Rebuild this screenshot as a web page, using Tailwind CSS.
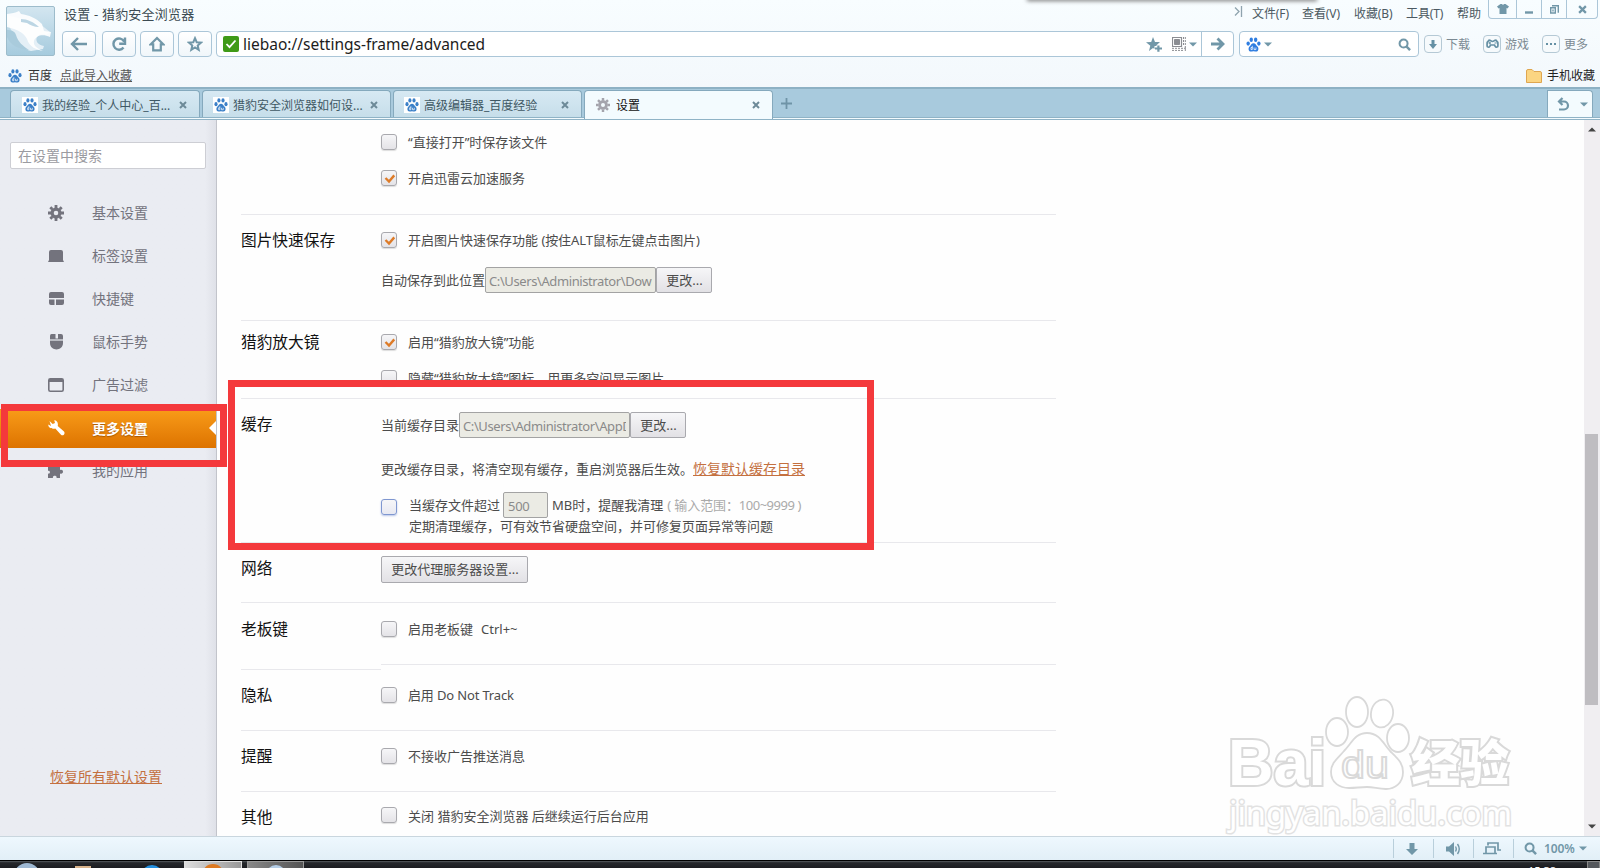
<!DOCTYPE html>
<html lang="zh-CN">
<head>
<meta charset="utf-8">
<title>设置 - 猎豹安全浏览器</title>
<script src="https://cdn.jsdelivr.net/npm/@tailwindcss/browser@4"></script>
</head>
<body class="relative flex h-[868px] w-[1600px] flex-col overflow-hidden bg-white font-['Noto_Sans','Noto_Sans_CJK_SC',sans-serif] text-[13px] whitespace-nowrap text-[#4c4c4c]">
<svg class="hidden">
  <symbol id="paw" viewBox="0 0 16 16">
    <ellipse cx="2.3" cy="7" rx="1.8" ry="2.3"/><ellipse cx="5.6" cy="2.8" rx="1.8" ry="2.4"/><ellipse cx="10.3" cy="2.8" rx="1.8" ry="2.4"/><ellipse cx="13.7" cy="7" rx="1.8" ry="2.3"/>
    <path d="M8 6.600c2 0 2.700 2 4.200 3.400 1.600 1.500 1.500 5.300-1.400 5.400-1.200 0-1.800-.3-2.800-.3s-1.600.3-2.800.3c-2.900-.1-3-3.900-1.400-5.400C5.300 8.600 6 6.600 8 6.600z"/>
    <path d="M6.700 9.400v4M6.700 11.200H5.300v2.200h1.400M8.600 11.200v2.200h2v-2.200" fill="none" stroke="#fff" stroke-width=".8"/>
  </symbol>
  <symbol id="gear" viewBox="0 0 16 16">
    <circle cx="8" cy="8" r="3.900" fill="none" stroke="currentColor" stroke-width="3.200"/>
    <g stroke="currentColor" stroke-width="2.800"><path d="M8 0v3M8 13v3M0 8h3M13 8h3M2.300 2.300l2 2M11.700 11.700l2 2M2.300 13.700l2-2M11.700 4.300l2-2"/></g>
  </symbol>
  <symbol id="close" viewBox="0 0 8 8"><path d="M1 1l6 6M7 1L1 7" stroke="currentColor" stroke-width="2"/></symbol>
  <symbol id="caret" viewBox="0 0 8 5"><path d="M0 .5h8L4 4.500z" fill="currentColor"/></symbol>
  <symbol id="mag" viewBox="0 0 14 14"><circle cx="6" cy="6" r="4.300" fill="none" stroke="currentColor" stroke-width="2.200"/><path d="M9 9l4 4" stroke="currentColor" stroke-width="2.600"/></symbol>
  <symbol id="tick" viewBox="0 0 16 16"><path d="M4 8l4 4 6-7" fill="none" stroke="#dd7b28" stroke-width="2.700"/></symbol>
</svg>

<!-- Browser header -->
<header class="flex h-[87px] shrink-0 bg-gradient-to-b from-[#f8fdff] to-[#f3f8fc]">
  <div class="flex w-[1234px] flex-col">
    <div class="flex h-[60px] pl-[6px] pt-[6px]">
      <div class="h-[50px] w-[50px] overflow-hidden rounded-[2px] border border-[#9dbccb] bg-gradient-to-b from-[#d3e6f0] to-[#a6cbde]">
        <svg width="48" height="48" viewBox="0 0 48 48">
          <path d="M0 15C7 27 9 40 24 44l12-2 1-3c-6-1-9-5-7-9 2-3 6-4 9-2l4-3-10-8L0 8z" fill="#e4eff6"/>
          <path d="M0 7c5-1 8-1 12-3l2 3c8 1 15 4 21 10l2 7 7 1-1 5c-7-3-14-2-16 4-1 5 3 7 9 10-6-1-14-4-16-12-3-6-8-8-13-10L0 20z" fill="#fff" opacity=".9"/>
          <path d="M14 12c6 0 13 3 18 8-5 0-9-2-12-4l-6-1z" fill="#bcd6e4"/>
          <path d="M0 23c4 0 8 1 9 5 2 7 7 11 13 15C11 42 3 38 0 30z" fill="#a9cbdc"/>
        </svg>
      </div>
      <div class="flex flex-col pl-[6px]">
        <div class="h-[25px] pl-[3px] text-[13px] leading-[17px] tracking-[0.2px] text-[#3b4a52]">设置 - 猎豹安全浏览器</div>
        <div class="ml-px flex items-start text-[#7197a8]">
          <div class="flex h-[26px] w-[34px] items-center justify-center rounded-[4px] border border-[#abc6d8] bg-gradient-to-b from-white to-[#f0f6fa]"><svg width="18" height="16" viewBox="0 0 18 16" fill="none" stroke="currentColor" stroke-width="2.400"><path d="M8 2L2 8l6 6M2.500 8H17"/></svg></div>
          <div class="ml-[6px] flex h-[26px] w-[34px] items-center justify-center rounded-[4px] border border-[#abc6d8] bg-gradient-to-b from-white to-[#f0f6fa]"><svg width="16" height="16" viewBox="0 0 16 16" fill="none" stroke="currentColor" stroke-width="2.400"><path d="M12.500 11.500A5.600 5.600 0 1 1 13 5.500M14 1.500v6.200H8.200"/></svg></div>
          <div class="ml-[4px] flex h-[26px] w-[34px] items-center justify-center rounded-[4px] border border-[#abc6d8] bg-gradient-to-b from-white to-[#f0f6fa]"><svg width="16" height="16" viewBox="0 0 16 16" fill="none" stroke="currentColor" stroke-width="2.200"><path d="M8 2L1.800 8.300h2.400v6h7.600v-6h2.400z"/></svg></div>
          <div class="ml-[4px] flex h-[26px] w-[34px] items-center justify-center rounded-[4px] border border-[#abc6d8] bg-gradient-to-b from-white to-[#f0f6fa]"><svg width="16" height="16" viewBox="0 0 16 16" fill="none" stroke="currentColor" stroke-width="2"><path d="M8 2.200l1.700 4 4.300.4-3.300 2.900 1 4.300L8 11.500l-3.700 2.300 1-4.300L2 6.600l4.300-.4z"/></svg></div>
          <div class="ml-[4px] flex h-[26px] w-[1018px] items-center rounded-[4px] border border-[#abc6d8] bg-white">
            <svg class="ml-[6px]" width="16" height="16" viewBox="0 0 16 16"><rect width="16" height="16" rx="2" fill="#3f9a17"/><path d="M3.500 8l3 3.200 6-6.700" fill="none" stroke="#fff" stroke-width="1.800"/></svg>
            <span class="ml-[4px] w-[899px] text-[15.500px] leading-6 text-[#1c1c1c]">liebao://settings-frame/advanced</span>
            <svg class="ml-[4px]" width="16" height="15" viewBox="0 0 16 15" fill="currentColor"><path d="M7 0l2 5h5l-3.500 3.200V9H8.500v3L7 11l-4 3 1.300-5.200L0 5.300 5.200 5z"/><path d="M11.300 8.500h2.200v2H16v2h-2.500v2.300h-2.200v-2.300H9v-2h2.300z"/></svg>
            <svg class="ml-[10px]" width="14" height="14" viewBox="0 0 14 14" fill="none" stroke="#8b8d92"><path d="M.5.5h9v9h-9z" stroke-width="1.200"/><path d="M2.500 2.500h5v5h-5z" fill="#8b8d92"/><path d="M11.500 0v9M13.300 0v14M0 11.300h14M0 13.400h11" stroke-dasharray="2 1" stroke-width="1"/></svg>
            <svg class="ml-[3px]" width="8" height="5"><use href="#caret"/></svg>
            <div class="ml-[4px] flex h-full flex-1 items-center justify-center border-l border-[#abc6d8]"><svg width="14" height="14" viewBox="0 0 14 14" fill="none" stroke="currentColor" stroke-width="2.800"><path d="M6.500 1.500L12 7l-5.500 5.500M12 7H0"/></svg></div>
          </div>
        </div>
      </div>
    </div>
    <div class="flex h-[27px] items-center pb-[1px] pl-[8px] pt-[5px] text-[12px] text-[#333]">
      <svg class="fill-[#3b80c8]" width="14" height="14"><use href="#paw"/></svg>
      <span class="ml-[6px]">百度</span>
      <span class="ml-[8px] text-[#555] underline underline-offset-1">点此导入收藏</span>
    </div>
  </div>
  <div class="flex flex-1 flex-col">
    <div class="flex h-[31px] items-start text-[12px] text-[#4b5961]">
      <svg class="mt-[6px]" width="9" height="11" viewBox="0 0 9 11" fill="none" stroke="#8fa3ae" stroke-width="1.300"><path d="M1 1.500l4 4-4 4M7.500 0v11"/></svg>
      <span class="ml-[9px] mt-[4px] w-[50px] leading-5 tracking-[-0.1px]">文件(F)</span>
      <span class="mt-[4px] w-[52px] leading-5 tracking-[-0.1px]">查看(V)</span>
      <span class="mt-[4px] w-[52px] leading-5 tracking-[-0.1px]">收藏(B)</span>
      <span class="mt-[4px] w-[51px] leading-5 tracking-[-0.1px]">工具(T)</span>
      <span class="mt-[4px] w-[31px] leading-5">帮助</span>
      <div class="flex h-[19px] w-[110px] rounded-b-[4px] border border-t-0 border-[#abc6d8] text-[#7197a8]">
        <div class="flex w-[27px] items-center justify-center"><svg width="12" height="10" viewBox="0 0 12 10" fill="currentColor"><path d="M3.500 0h1.300c.5 1 1.900 1 2.400 0h1.300L12 2.500l-1.500 2-1-.5v6h-7V4l-1 .5L0 2.500z"/></svg></div>
        <div class="flex w-[25px] items-center justify-center border-l border-[#abc6d8] pt-[6px]"><svg width="8" height="3"><path d="M0 1.500h8" stroke="currentColor" stroke-width="2.400"/></svg></div>
        <div class="flex w-[25px] items-center justify-center border-l border-[#abc6d8]"><svg width="9" height="9" viewBox="0 0 9 9" fill="none" stroke="currentColor" stroke-width="1.400"><path d="M2 .7h6.300v7M.7 2.700h4.600v5.300H.7zM3 4.500v2"/></svg></div>
        <div class="flex flex-1 items-center justify-center border-l border-[#abc6d8]"><svg width="9" height="9"><use href="#close"/></svg></div>
      </div>
    </div>
    <div class="flex h-[26px] items-center pl-[5px] text-[12px] text-[#7c8a93]">
      <div class="flex h-[26px] w-[180px] items-center rounded-[4px] border border-[#abc6d8] bg-white pl-[6px] text-[#7197a8]">
        <svg class="fill-[#2f7de0]" width="15" height="15"><use href="#paw"/></svg>
        <svg class="ml-[3px]" width="8" height="5"><use href="#caret"/></svg>
        <svg class="ml-[126px]" width="13" height="13"><use href="#mag"/></svg>
      </div>
      <div class="ml-[5px] flex h-[18px] w-[18px] items-center justify-center rounded-[4px] border border-[#b5c9d5] bg-[#f6fafc]"><svg width="8" height="9" viewBox="0 0 8 9" fill="#6590a4"><path d="M2.500 0h3v4H8L4 9 0 4h2.500z"/></svg></div>
      <span class="ml-[4px] w-[37px] pt-px">下载</span>
      <div class="flex h-[18px] w-[18px] items-center justify-center rounded-[4px] border border-[#b5c9d5] bg-[#f6fafc]"><svg width="13" height="10" viewBox="0 0 13 10" fill="none" stroke="#6590a4" stroke-width="1.700"><path d="M3 1.200c2 0 2 1.300 3.500 1.300S8 1.200 10 1.200c1.500 1 2.200 4 1.700 6.500-1.500 1.200-2.500.3-3.200-1.700h-4C3.800 8 2.800 8.900 1.300 7.700.8 5.200 1.500 2.200 3 1.200z"/><path d="M3.800 2.800v2.400M2.600 4h2.400M8.500 4h2" stroke-width="1.100"/></svg></div>
      <span class="ml-[4px] w-[37px] pt-px">游戏</span>
      <div class="flex h-[18px] w-[18px] items-center justify-center gap-[2px] rounded-[4px] border border-[#b5c9d5] bg-[#f6fafc]"><i class="size-[2px] bg-[#6590a4]"></i><i class="size-[2px] bg-[#6590a4]"></i><i class="size-[2px] bg-[#6590a4]"></i></div>
      <span class="ml-[4px] pt-px">更多</span>
    </div>
    <div class="flex h-[30px] items-center justify-end pr-[5px] pt-[7px] text-[12px] text-[#222]">
      <svg width="16" height="14" viewBox="0 0 16 14"><path d="M.5 2Q.5.500 2 .500h4L8 2.500h6q1.500 0 1.500 1.500v9.500H.5z" fill="#fbd582" stroke="#dfa650"/></svg>
      <span class="ml-[5px]">手机收藏</span>
    </div>
  </div>
</header>

<!-- Tab strip -->
<nav class="flex h-[33px] shrink-0 flex-col border-t-2 border-[#8db1c4] bg-[#a8cadd]">
  <div class="flex h-[28px] items-start pl-[10px] pt-px text-[12px] text-[#3f5864]">
    <div class="flex h-[27px] w-[190px] items-center rounded-t-[4px] border border-b-0 border-[#85a9bd] bg-gradient-to-b from-[#d7e9f3] to-[#c6deea] pl-[11px] pt-[2px]">
      <span class="flex size-[16px] items-center justify-center bg-white"><svg class="fill-[#3b80c8]" width="14" height="14"><use href="#paw"/></svg></span>
      <span class="ml-[4px] w-[137px] pt-[2px]">我的经验_个人中心_百...</span><svg class="text-[#6d8a98]" width="8" height="8"><use href="#close"/></svg>
    </div>
    <div class="ml-[2px] flex h-[27px] w-[189px] items-center rounded-t-[4px] border border-b-0 border-[#85a9bd] bg-gradient-to-b from-[#d7e9f3] to-[#c6deea] pl-[10px] pt-[2px]">
      <span class="flex size-[16px] items-center justify-center bg-white"><svg class="fill-[#3b80c8]" width="14" height="14"><use href="#paw"/></svg></span>
      <span class="ml-[4px] w-[137px] pt-[2px]">猎豹安全浏览器如何设...</span><svg class="text-[#6d8a98]" width="8" height="8"><use href="#close"/></svg>
    </div>
    <div class="ml-[2px] flex h-[27px] w-[189px] items-center rounded-t-[4px] border border-b-0 border-[#85a9bd] bg-gradient-to-b from-[#d7e9f3] to-[#c6deea] pl-[10px] pt-[2px]">
      <span class="flex size-[16px] items-center justify-center bg-white"><svg class="fill-[#3b80c8]" width="14" height="14"><use href="#paw"/></svg></span>
      <span class="ml-[4px] w-[137px] pt-[2px]">高级编辑器_百度经验</span><svg class="text-[#6d8a98]" width="8" height="8"><use href="#close"/></svg>
    </div>
    <div class="relative z-10 ml-[2px] flex h-[29px] w-[189px] items-center rounded-t-[4px] border border-b-0 border-[#85a9bd] bg-[#f3fbfe] pl-[11px] text-[#111]">
      <svg class="text-[#a4a4ac]" width="14" height="14"><use href="#gear"/></svg>
      <span class="ml-[5px] w-[137px] pl-px pt-[2px]">设置</span><svg class="text-[#6d8a98]" width="8" height="8"><use href="#close"/></svg>
    </div>
    <svg class="ml-[8px] mt-[8px]" width="11" height="11"><path d="M5.500 0v11M0 5.500h11" stroke="#6f94a7" stroke-width="1.800"/></svg>
    <div class="ml-auto mr-[7px] flex h-[27px] w-[46px] items-center rounded-tr-[4px] border border-b-0 border-[#85a9bd] bg-[#f3fbfe] pl-[9px] text-[#7197a8]">
      <svg width="13" height="14" viewBox="0 0 13 14" fill="none" stroke="currentColor" stroke-width="2.200"><path d="M5.500 1L2 4.500 5.500 8M2 4.500h5a4 4 0 0 1 0 8H2"/></svg>
      <svg class="ml-[10px]" width="8" height="5"><use href="#caret"/></svg>
    </div>
  </div>
  <div class="h-[3px] border-y border-[#8fb3c6] bg-[#f3fbfe]"></div>
</nav>

<div class="flex h-[716px] shrink-0">
  <!-- Sidebar -->
  <aside class="flex w-[217px] flex-col border-r border-[#c2c4cb] bg-gradient-to-r from-[#eaecf2] from-95% to-[#dfe1e8] pt-[22px] text-[14px] text-[#73737d]">
    <div class="ml-[10px] flex h-[27px] w-[196px] items-center rounded-[2px] border border-[#cdced4] bg-white pl-[7px] text-[#9b9ba1]">在设置中搜索</div>
    <div class="mt-[22px] flex flex-col">
      <div class="flex h-[43px] items-center pl-[48px]"><svg width="16" height="16"><use href="#gear"/></svg><span class="ml-[28px]">基本设置</span></div>
      <div class="flex h-[43px] items-center pl-[48px]"><svg width="16" height="12" viewBox="0 0 16 12" fill="currentColor"><path d="M1 2q0-2 2-2h10q2 0 2 2v8l1 2H0l1-2z"/></svg><span class="ml-[28px]">标签设置</span></div>
      <div class="flex h-[43px] items-center pl-[48px]"><svg width="16" height="14" viewBox="0 0 16 14" fill="currentColor"><path d="M1 2q0-2 2-2h11q2 0 2 2v4H1zM1 7.500h5.500V13H3q-2 0-2-2zM8 7.500h8V11q0 2-2 2H8z"/></svg><span class="ml-[28px]">快捷键</span></div>
      <div class="flex h-[43px] items-center pl-[48px]"><svg width="16" height="16" viewBox="0 0 16 16" fill="currentColor"><path d="M3.500 0H7.500v4.500H10V0h3q2 0 2 2v7c0 8.500-13 8.500-13 0V2Q2 0 3.500 0z"/><path d="M2 6h13" stroke="#eaecf2" stroke-width="1.200"/></svg><span class="ml-[28px]">鼠标手势</span></div>
      <div class="flex h-[43px] items-center pl-[48px]"><svg width="16" height="14" viewBox="0 0 16 14"><rect x=".8" y=".8" width="14.400" height="12.400" rx="1.500" fill="none" stroke="currentColor" stroke-width="1.600"/><path d="M1 1h14v3H1z" fill="currentColor"/></svg><span class="ml-[28px]">广告过滤</span></div>
      <div class="flex h-[43px] items-center">
        <div class="mt-px flex h-[39px] w-full items-center bg-gradient-to-b from-[#f99c18] to-[#dd7300] pl-[48px] font-bold text-white [text-shadow:0_1px_1px_#a85800]"><svg width="17" height="16" viewBox="0 0 17 16" fill="#fff"><path d="M1.500 1l3.200 3L7 3 6.200.3C9 .3 10.500 3 9.700 6l6.300 5.500c1.700 2-1 5-3 3.300L7.300 8.500C4 9.500 0 8 .3 4.500L3 6z"/></svg><span class="ml-[27px]">更多设置</span><svg class="ml-auto" width="7" height="14"><path d="M7 0L0 7l7 7z" fill="#fff"/></svg></div>
      </div>
      <div class="flex h-[43px] items-center pl-[48px]"><svg width="16" height="14" viewBox="0 0 16 14" fill="currentColor"><path d="M0 2h4c-1-3 5-3 4 0h4v4c4-1.500 4 5 0 3.500V14H8.500c1-3-4.500-3-3.500 0H0V9.500c2.500 1 2.500-3.500 0-2.500z"/></svg><span class="ml-[28px]">我的应用</span></div>
    </div>
    <div class="mt-auto pb-[48px] pl-[50px] leading-[22px] text-[#c4703f] underline underline-offset-1">恢复所有默认设置</div>
  </aside>

  <!-- Settings -->
  <main class="flex flex-1 flex-col overflow-hidden bg-[#fefefe] pl-[24px] leading-4">
    <section class="flex h-[94px] w-[815px] flex-col gap-[20px] pl-[140px] pt-[14px]">
      <div class="flex h-4 items-center"><i class="size-4 rounded-[3px] border border-[#a9a9ae] bg-gradient-to-b from-[#f6f6f8] to-[#e4e3e7] shadow-[0_1px_1px_#ddd]"></i><span class="ml-[11px]">“直接打开”时保存该文件</span></div>
      <div class="flex h-4 items-center"><i class="flex size-4 rounded-[3px] border border-[#a9a9ae] bg-gradient-to-b from-[#f6f6f8] to-[#e4e3e7] shadow-[0_1px_1px_#ddd]"><svg width="14" height="14"><use href="#tick"/></svg></i><span class="ml-[11px]">开启迅雷云加速服务</span></div>
    </section>

    <section class="flex h-[106px] w-[815px] border-t border-[#e8e8ec]">
      <h2 class="w-[140px] pt-[13px] text-[15.700px] leading-6 text-[#111]">图片快速保存</h2>
      <div class="pt-[17px]">
        <div class="flex h-4 items-center"><i class="flex size-4 rounded-[3px] border border-[#a9a9ae] bg-gradient-to-b from-[#f6f6f8] to-[#e4e3e7] shadow-[0_1px_1px_#ddd]"><svg width="14" height="14"><use href="#tick"/></svg></i><span class="ml-[11px]">开启图片快速保存功能 <span class="tracking-[-0.1px]">(按住ALT鼠标左键点击图片)</span></span></div>
        <div class="mt-[19px] flex h-[26px] items-center"><span>自动保存到此位置</span><span class="flex h-[26px] w-[171px] items-center rounded-[2px] border border-[#a3a3a3] bg-[#ebebe4] px-[3px] text-[#8a8a8a]"><span class="w-full overflow-hidden pt-[2px] tracking-[-0.4px]">C:\Users\Administrator\Down</span></span><span class="flex h-[26px] w-[56px] items-center justify-center rounded-[2px] border border-[#a9a9ae] bg-gradient-to-b from-[#f6f6f8] to-[#e2e1e5] pb-px pl-px">更改...</span></div>
      </div>
    </section>

    <section class="flex h-[78px] w-[815px] border-t border-[#e8e8ec]">
      <h2 class="w-[140px] pt-[9px] text-[15.700px] leading-6 text-[#111]">猎豹放大镜</h2>
      <div class="flex flex-col gap-[20px] pt-[13px]">
        <div class="flex h-4 items-center"><i class="flex size-4 rounded-[3px] border border-[#a9a9ae] bg-gradient-to-b from-[#f6f6f8] to-[#e4e3e7] shadow-[0_1px_1px_#ddd]"><svg width="14" height="14"><use href="#tick"/></svg></i><span class="ml-[11px]">启用“猎豹放大镜”功能</span></div>
        <div class="flex h-4 items-center"><i class="size-4 rounded-[3px] border border-[#a9a9ae] bg-gradient-to-b from-[#f6f6f8] to-[#e4e3e7] shadow-[0_1px_1px_#ddd]"></i><span class="ml-[11px]">隐藏“猎豹放大镜”图标，用更多空间显示图片</span></div>
      </div>
    </section>

    <section class="flex h-[144px] w-[815px] border-t border-[#e8e8ec]">
      <h2 class="w-[140px] pt-[13px] text-[15.700px] leading-6 text-[#111]">缓存</h2>
      <div class="pt-[13px]">
        <div class="flex h-[26px] items-center"><span>当前缓存目录</span><span class="flex h-[26px] w-[171px] items-center rounded-[2px] border border-[#a3a3a3] bg-[#ebebe4] px-[3px] text-[#8a8a8a]"><span class="w-full overflow-hidden pt-[2px] tracking-[-0.4px]">C:\Users\Administrator\AppD</span></span><span class="flex h-[26px] w-[56px] items-center justify-center rounded-[2px] border border-[#a9a9ae] bg-gradient-to-b from-[#f6f6f8] to-[#e2e1e5] pb-px pl-px">更改...</span></div>
        <div class="mt-[21px] h-[20px] leading-5">更改缓存目录，将清空现有缓存，重启浏览器后生效。<span class="text-[14px] text-[#c4703f] underline underline-offset-1">恢复默认缓存目录</span></div>
        <div class="mt-[13px] flex h-[26px] items-center"><i class="mt-[4px] size-4 rounded-[3px] border border-[#7f97d0] bg-gradient-to-b from-[#f6f6f8] to-[#e8e9f2] shadow-[0_1px_2px_#b9c6e8]"></i><span class="ml-[12px] w-[94px]">当缓存文件超过</span><span class="flex h-[26px] w-[45px] items-center rounded-[2px] border border-[#a3a3a3] bg-[#ebebe4] pl-[4px] pt-[2px] tracking-[-0.3px] text-[#8a8a8a]">500</span><span class="ml-[4px]">MB时，提醒我清理</span><span class="ml-[4px] tracking-[-0.1px] text-[#aaa]">( 输入范围：<span class="tracking-[-0.500px]">100~9999</span> )</span></div>
        <div class="pl-[28px]">定期清理缓存，可有效节省硬盘空间，并可修复页面异常等问题</div>
      </div>
    </section>

    <section class="flex h-[60px] w-[815px] border-t border-[#e8e8ec]">
      <h2 class="w-[140px] pt-[13px] text-[15.700px] leading-6 text-[#111]">网络</h2>
      <div class="pt-[13px]"><span class="flex h-[27px] w-[147px] items-center justify-center rounded-[2px] border border-[#a9a9ae] bg-gradient-to-b from-[#f6f6f8] to-[#e2e1e5] pb-[2px] pl-px">更改代理服务器设置...</span></div>
    </section>

    <section class="flex h-[68px] w-[815px] items-start border-t border-[#e8e8ec]">
      <h2 class="h-[67px] w-[140px] border-b border-[#e8e8ec] pt-[14px] text-[15.700px] leading-6 text-[#111]">老板键</h2>
      <div class="h-[62px] flex-1 border-b border-[#e8e8ec] pt-[18px]">
        <div class="flex h-4 items-center"><i class="size-4 rounded-[3px] border border-[#a9a9ae] bg-gradient-to-b from-[#f6f6f8] to-[#e4e3e7] shadow-[0_1px_1px_#ddd]"></i><span class="ml-[11px]">启用老板键</span><span class="ml-[8px]">Ctrl+~</span></div>
      </div>
    </section>

    <section class="flex h-[60px] w-[815px]">
      <h2 class="w-[140px] pt-[13px] text-[15.700px] leading-6 text-[#111]">隐私</h2>
      <div class="pt-[17px]"><div class="flex h-4 items-center"><i class="size-4 rounded-[3px] border border-[#a9a9ae] bg-gradient-to-b from-[#f6f6f8] to-[#e4e3e7] shadow-[0_1px_1px_#ddd]"></i><span class="ml-[11px] tracking-[-0.15px]">启用 Do Not Track</span></div></div>
    </section>

    <section class="flex h-[61px] w-[815px] border-t border-[#e8e8ec]">
      <h2 class="w-[140px] pt-[13px] text-[15.700px] leading-6 text-[#111]">提醒</h2>
      <div class="pt-[17px]"><div class="flex h-4 items-center"><i class="size-4 rounded-[3px] border border-[#a9a9ae] bg-gradient-to-b from-[#f6f6f8] to-[#e4e3e7] shadow-[0_1px_1px_#ddd]"></i><span class="ml-[11px]">不接收广告推送消息</span></div></div>
    </section>

    <section class="flex h-[45px] w-[815px] border-t border-[#e8e8ec]">
      <h2 class="w-[140px] pt-[13px] text-[15.700px] leading-6 text-[#111]">其他</h2>
      <div class="pt-[15px]"><div class="flex h-4 items-center"><i class="size-4 rounded-[3px] border border-[#a9a9ae] bg-gradient-to-b from-[#f6f6f8] to-[#e4e3e7] shadow-[0_1px_1px_#ddd]"></i><span class="ml-[11px] pt-[2px]">关闭 猎豹安全浏览器 后继续运行后台应用</span></div></div>
    </section>
  </main>

  <!-- Scrollbar -->
  <div class="flex w-[16px] flex-col items-center bg-[#f0eef1] py-[7px] pr-px text-[#444]">
    <svg class="rotate-180" width="8" height="5"><use href="#caret"/></svg>
    <div class="mt-[302px] h-[271px] w-[13px] bg-[#bfbdc1]"></div>
    <svg class="mt-auto" width="8" height="5"><use href="#caret"/></svg>
  </div>
</div>

<!-- Status bar -->
<footer class="flex h-[24px] shrink-0 items-center justify-end border-t border-[#c9d6de] bg-gradient-to-b from-[#eef8fe] to-[#e2eff7] text-[#7197a8]">
  <div class="flex h-[19px] w-[40px] items-center justify-center border-l border-[#b9cfdb] pr-[3px]"><svg width="12" height="12" viewBox="0 0 12 12" fill="currentColor"><path d="M3.500 0h5v6H12l-6 6-6-6h3.500z"/></svg></div>
  <div class="flex h-[19px] w-[40px] items-center justify-center border-l border-[#b9cfdb]"><svg width="15" height="14" viewBox="0 0 15 14"><path d="M0 4.500h3L8 0v14L3 9.500H0z" fill="currentColor"/><path d="M9.500 4.500q1.500 2.500 0 5M11.500 2q3.500 5 0 10" fill="none" stroke="currentColor" stroke-width="1.400"/></svg></div>
  <div class="flex h-[19px] w-[40px] items-center justify-center border-l border-[#b9cfdb] pr-[3px]"><svg width="18" height="13" viewBox="0 0 18 13" fill="none" stroke="currentColor" stroke-width="1.700"><path d="M5 3.500V1h10v7h3M3 11V5h9v6M0 11.500h14"/></svg></div>
  <div class="flex h-[19px] w-[87px] items-center border-l border-[#b9cfdb] pl-[10px]"><svg width="13" height="13"><use href="#mag"/></svg><span class="ml-[7px] w-[34px] text-[12px] font-semibold tracking-[-0.1px]">100%</span><svg class="ml-px" width="8" height="5"><use href="#caret"/></svg></div>
</footer>

<!-- Taskbar -->
<div class="flex h-[8px] shrink-0 items-start overflow-hidden border-t border-black bg-gradient-to-b from-[#5a5f63] via-[#26282c] via-25% to-[#1b1c20]">
  <div class="ml-[14px] mt-[2px] size-[26px] shrink-0 rounded-full bg-[#9fb9d3]"></div>
  <div class="ml-[35px] mt-[5px] h-[5px] w-[16px] bg-[#d9b48c]"></div>
  <div class="ml-[50px] mt-[4px] size-[22px] shrink-0 rounded-full bg-[#2490e0]"></div>
  <div class="ml-[21px] flex h-[8px] w-[58px] justify-center overflow-hidden border border-[#e0e0e0] bg-gradient-to-r from-[#ddd] to-[#999]"><div class="mt-[2px] size-[22px] shrink-0 rounded-full bg-[#dd7a22]"></div></div>
  <div class="ml-[5px] flex h-[8px] w-[57px] justify-center overflow-hidden border border-[#999] bg-gradient-to-r from-[#888] to-[#555]"><div class="mt-[3px] size-[20px] shrink-0 rounded-full bg-[#b4cde6]"></div></div>
  <span class="ml-auto mt-[4px] text-[11px] leading-[12px] text-white">15:38</span>
  <div class="ml-[31px] h-[8px] w-[13px] border border-[#888] bg-[#55585c]"></div>
</div>

<!-- Window shadow at the top edge -->
<div class="absolute left-[1027px] top-[-4px] h-[4px] w-[290px] bg-[#888] shadow-[0_1px_4px_#777]"></div>

<!-- Watermark -->
<svg class="absolute left-[1220px] top-[690px]" width="300" height="150" viewBox="0 0 300 150" fill="#fff" stroke="#d9d9d9" stroke-width="1.800">
  <g font-family="'Liberation Sans',Arial,sans-serif" font-weight="bold">
    <text x="8" y="95" font-size="65" textLength="98" lengthAdjust="spacingAndGlyphs" paint-order="stroke" stroke-width="4">Bai</text>
    <ellipse cx="117" cy="42" rx="11" ry="14"/><ellipse cx="137" cy="22" rx="11" ry="15"/><ellipse cx="162" cy="23.500" rx="11" ry="14" transform="rotate(10 162 23.500)"/><ellipse cx="178" cy="48" rx="11" ry="14"/>
    <path d="M147 43c12 0 16 10 23 18 8 8 13 12 13 21 0 11-8 17-17 17-8 0-12-2-19-2s-11 1-18 1c-9 0-18-5-18-16 0-9 6-13 13-21 8-8 11-18 23-18z"/>
    <text x="121" y="88" font-size="38" font-weight="normal" textLength="48" lengthAdjust="spacingAndGlyphs">du</text>
  </g>
  <text x="191" y="91" font-family="'Noto Sans CJK SC',sans-serif" font-weight="900" font-size="49" paint-order="stroke" stroke-width="4">经验</text>
  <text x="9" y="135" font-family="'Noto Sans',sans-serif" font-size="33" textLength="283" lengthAdjust="spacingAndGlyphs" paint-order="stroke" stroke-width="3" stroke="#e2e2e2">jingyan.baidu.com</text>
</svg>

<!-- Highlight frames -->
<div class="absolute left-[1px] top-[404px] h-[63px] w-[226px] border-[7px] border-[#f4393c]"></div>
<div class="absolute left-[228px] top-[380px] h-[170px] w-[646px] border-[7px] border-[#f4393c]"></div>
</body>
</html>
